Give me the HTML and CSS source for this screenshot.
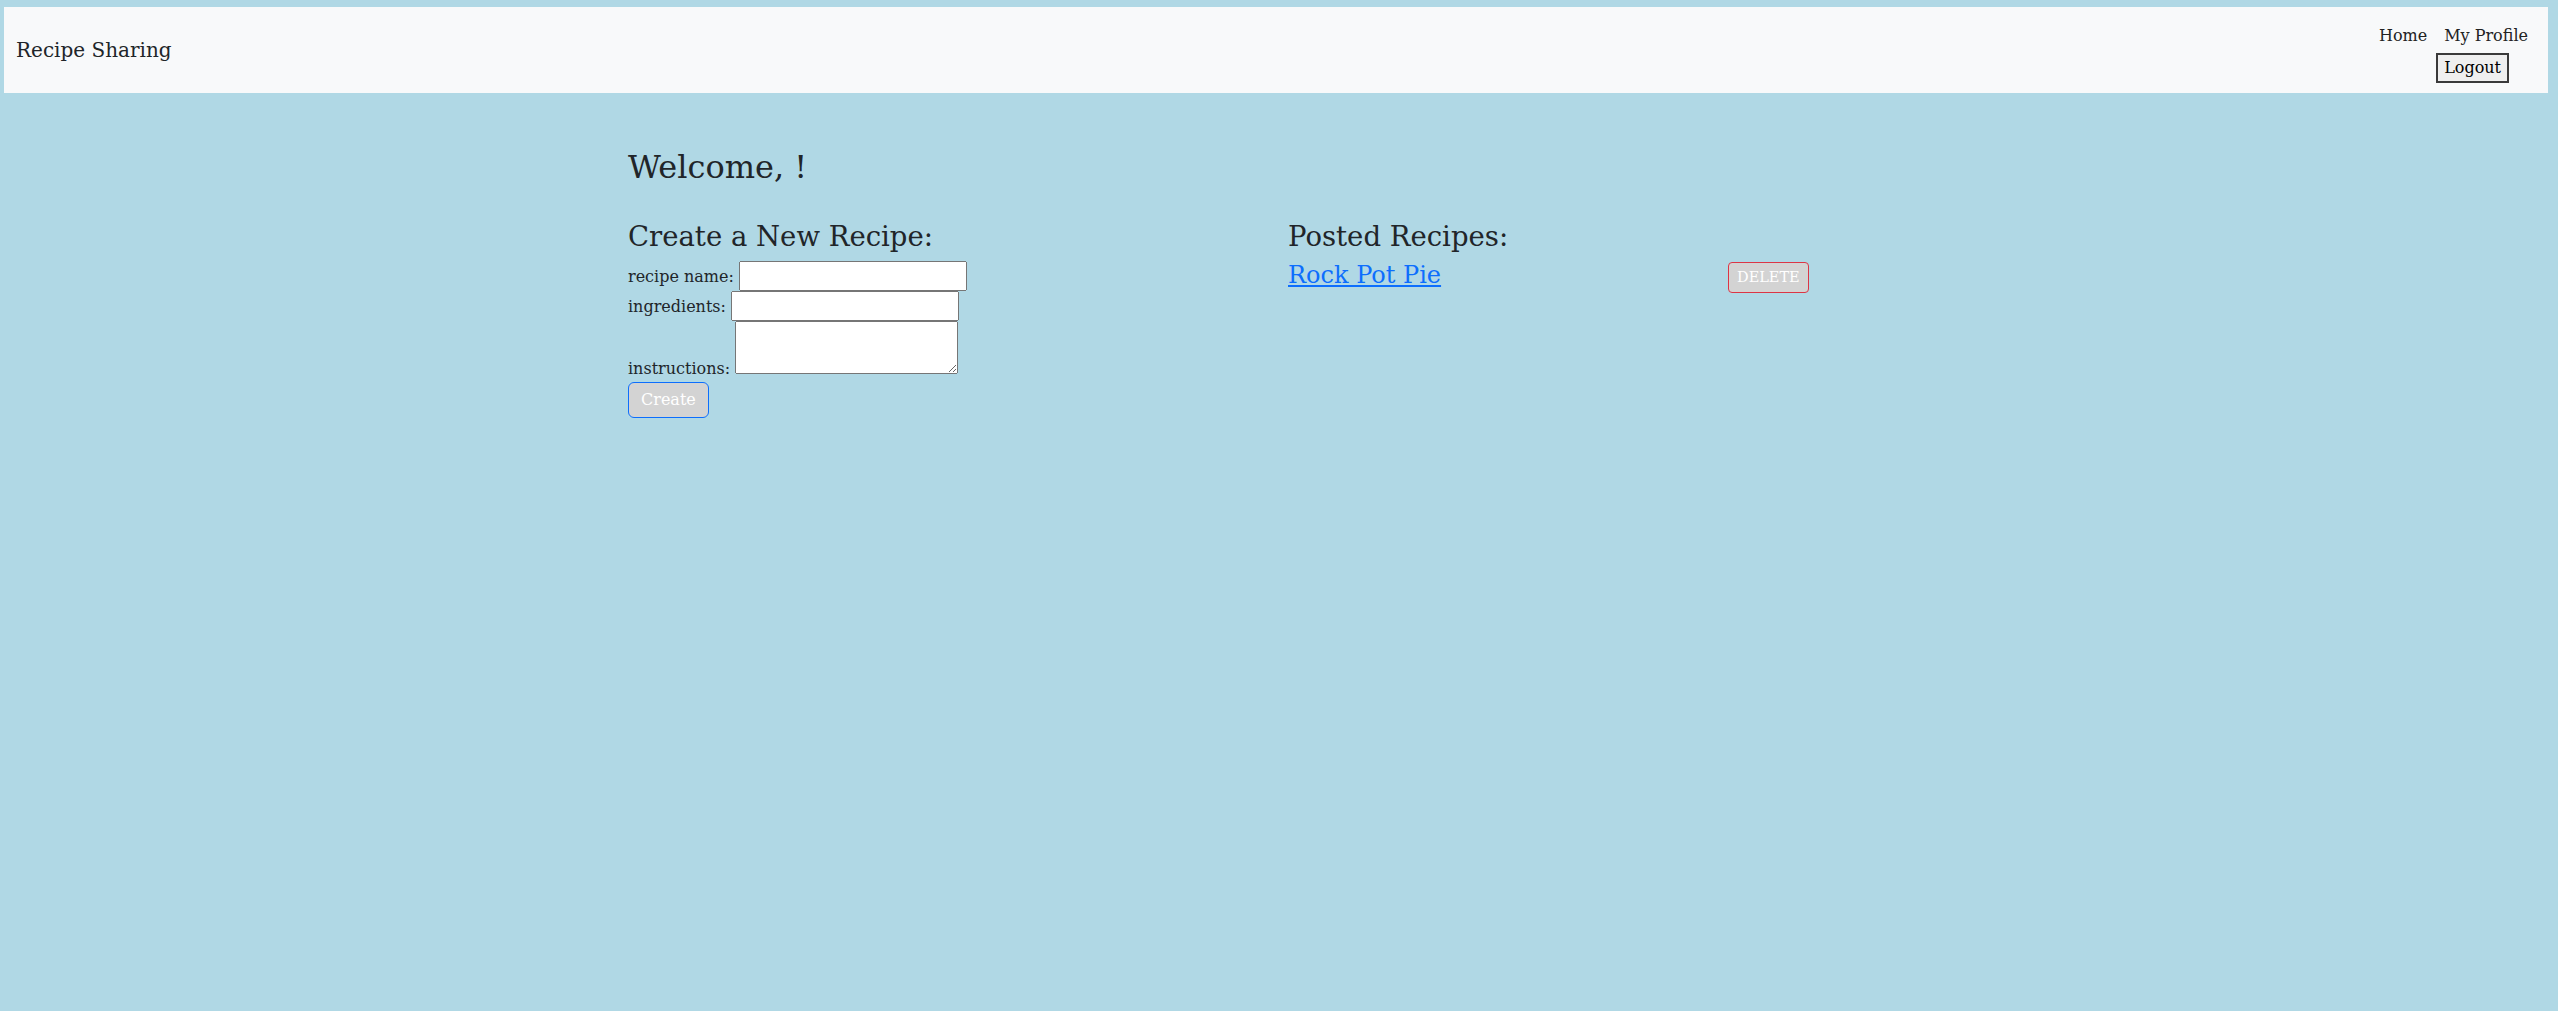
FILE: index.html
```html
<!DOCTYPE html>
<html lang="en">
<head>
<meta charset="utf-8">
<title>Recipe Sharing</title>
<link rel="stylesheet" href="styles.css">
</head>
<body>
<nav class="navbar">
  <a class="brand" href="#">Recipe Sharing</a>
  <div class="nav-right">
    <div class="nav-links">
      <a class="nav-link" href="#">Home</a>
      <a class="nav-link" href="#">My Profile</a>
    </div>
    <button class="logout" type="button">Logout</button>
  </div>
</nav>
<main class="container">
  <h2 class="welcome">Welcome, !</h2>
  <div class="row">
    <section class="col">
      <h3 class="heading">Create a New Recipe:</h3>
      <form class="recipe-form">
        <label>recipe name: </label><input class="field" type="text"><br>
        <label>ingredients: </label><input class="field" type="text"><br>
        <label>instructions: </label><textarea class="area"></textarea><br>
        <button class="btn-create" type="button">Create</button>
      </form>
    </section>
    <section class="col">
      <h3 class="heading">Posted Recipes:</h3>
      <div class="recipe-row">
        <div class="recipe-name"><a class="recipe-link" href="#">Rock Pot Pie</a></div>
        <button class="btn-delete" type="button">DELETE</button>
      </div>
    </section>
  </div>
</main>
</body>
</html>
```
FILE: styles.css
```css
* { box-sizing: border-box; }
html, body { margin: 0; }
body {
  background: #b0d8e5;
  font-family: "DejaVu Serif", serif;
  font-size: 16px;
  line-height: 1.5;
  color: #212529;
}
.navbar {
  margin: 7px 10px 0 4px;
  height: 86px;
  background: #f8f9fa;
  display: flex;
  justify-content: space-between;
  align-items: center;
  padding: 0 20px 0 12px;
}
.brand {
  font-size: 20px;
  color: #212529;
  text-decoration: none;
  line-height: 1.5;
}
.nav-right {
  display: flex;
  flex-direction: column;
  align-items: flex-end;
  padding-top: 6px;
}
.nav-links {
  display: flex;
  gap: 17px;
  line-height: 24px;
}
.nav-link {
  color: #222;
  text-decoration: none;
}
.logout {
  margin-top: 5px;
  margin-right: 19px;
  font: inherit;
  line-height: 26px;
  padding: 0 6px;
  border: 2px solid #3a3a3a;
  background: #efefef;
  color: #000;
  border-radius: 0;
}
.container {
  width: 1320px;
  margin: 0 auto;
  padding: 0 9px;
}
.welcome {
  font-size: 32px;
  font-weight: 400;
  line-height: 1.2;
  margin: 55px 0 8px;
}
.row {
  display: grid;
  grid-template-columns: 1fr 1fr;
  column-gap: 18px;
  margin-top: 34px;
}
.heading {
  font-size: 27.5px;
  font-weight: 400;
  line-height: 1.2;
  margin: 0 0 8px;
}
.recipe-form input, .recipe-form textarea, .recipe-form button {
  font-family: inherit;
  font-size: inherit;
  line-height: inherit;
}
.field {
  width: 228px;
  height: 30px;
  padding: 1px 2px;
  margin: 0;
}
.area {
  width: 223px;
  height: 53px;
  margin: 0;
}
.btn-create {
  margin-top: 1px;
  padding: 5px 12px;
  background: #d3d3d3;
  color: #fff;
  border: 1px solid #0d6efd;
  border-radius: 6px;
}
.recipe-row {
  display: flex;
  align-items: flex-start;
}
.recipe-name {
  width: 440px;
  font-size: 24px;
  line-height: 1.2;
}
.recipe-link {
  color: #0d6efd;
  text-decoration: underline;
}
.btn-delete {
  margin-top: 1px;
  font-family: inherit;
  font-size: 14.5px;
  line-height: 21px;
  padding: 4px 8px;
  background: #d3d3d3;
  color: #fff;
  border: 1px solid #dc3545;
  border-radius: 4px;
}
```
